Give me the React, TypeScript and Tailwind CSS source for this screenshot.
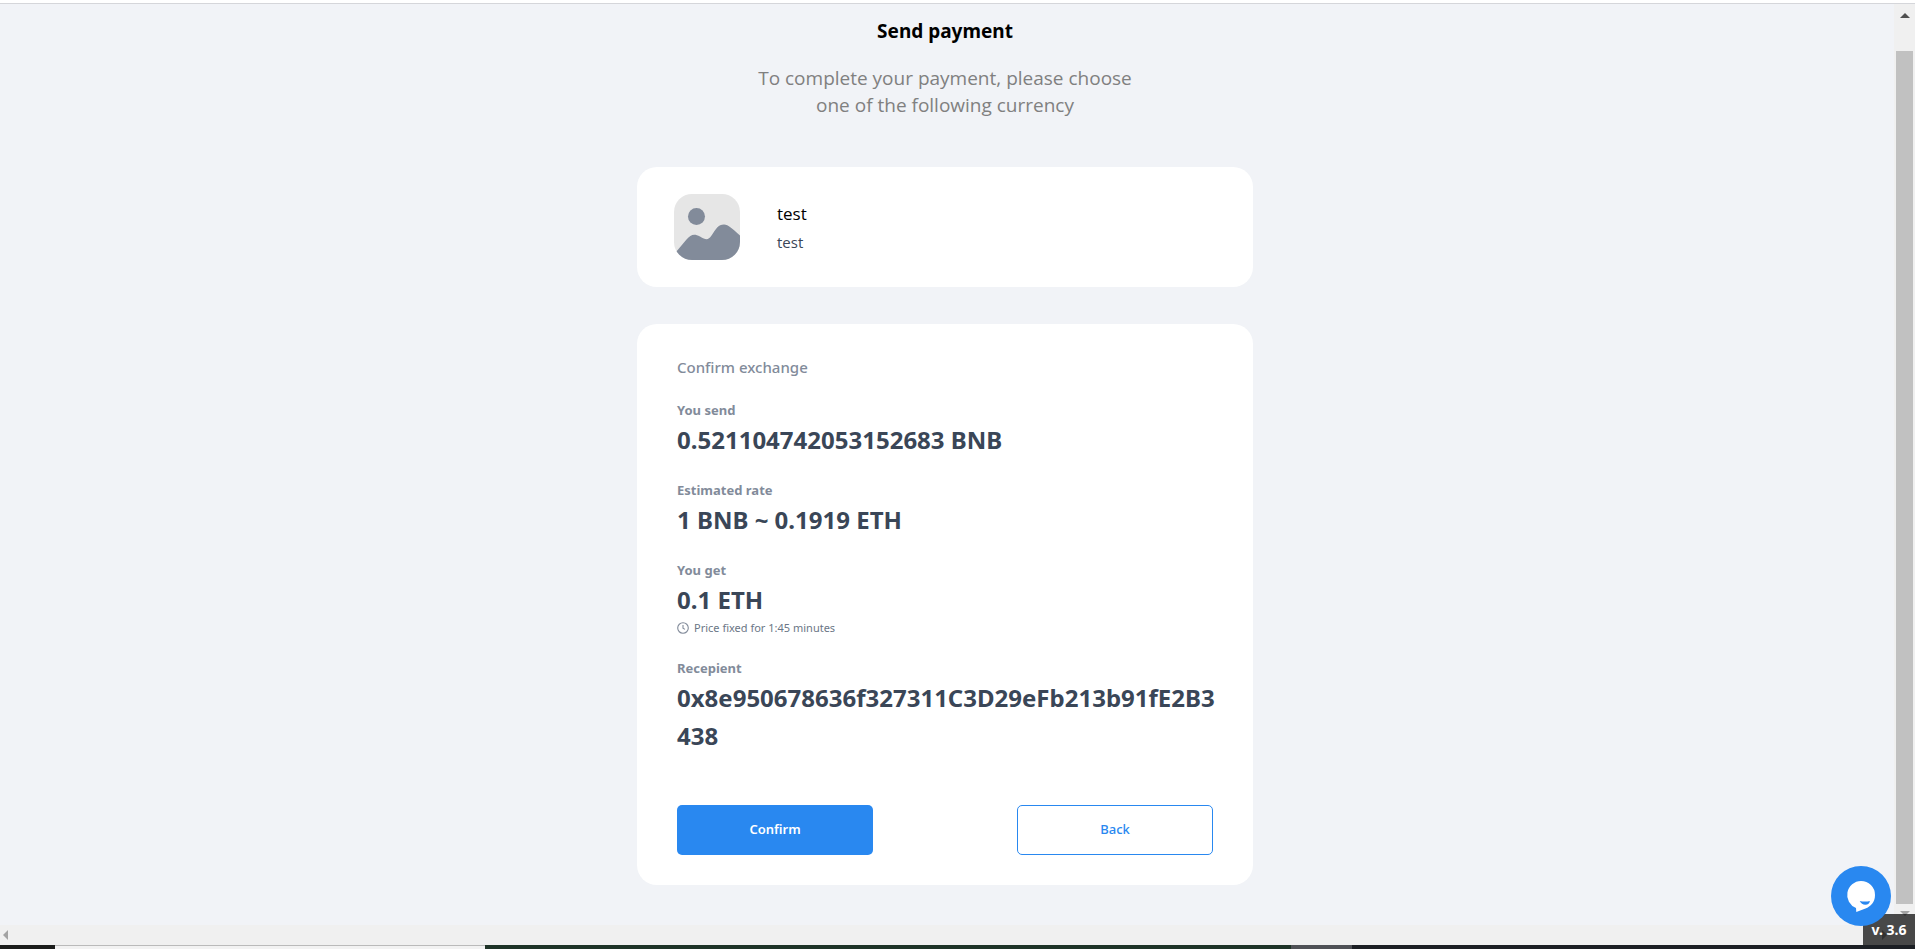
import type { ReactNode } from "react";

function Arrow({ points, className }: { points: string; className: string }) {
  return (
    <svg viewBox="0 0 10 10" className={`size-2.5 shrink-0 ${className}`} aria-hidden="true">
      <polygon points={points} fill="currentColor" />
    </svg>
  );
}

function PlaceholderImage() {
  return (
    <svg viewBox="0 0 66 66" className="size-[66px] shrink-0" role="img" aria-label="Product">
      <defs>
        <clipPath id="tile">
          <rect width="66" height="66" rx="18" />
        </clipPath>
      </defs>
      <g clipPath="url(#tile)">
        <rect width="66" height="66" fill="#e6e6e6" />
        <circle cx="22.5" cy="22.5" r="8.5" fill="#828b9a" />
        <path
          d="M2 58 L12.5 45.5 C17 40 20.5 39.5 26 42.5 C32 46 34 46.5 37.5 41.5 C42 35 44 30.5 50 30.5 C54.5 30.5 58 34.5 66 41.5 V66 H2 Z"
          fill="#828b9a"
        />
      </g>
    </svg>
  );
}

function ClockIcon() {
  return (
    <svg viewBox="0 0 12 12" className="size-3 shrink-0" fill="none" stroke="#828b9a" aria-hidden="true">
      <circle cx="6" cy="6" r="5.3" strokeWidth="1.1" />
      <path d="M6 3 V6.2 L8 7.4" strokeWidth="1.1" />
    </svg>
  );
}

function Field({ label, value, children }: { label: string; value: string; children?: ReactNode }) {
  return (
    <div>
      <dt className="text-[13px] leading-[21px] font-bold text-[#828b9a]">{label}</dt>
      <dd className="-mr-1 text-2xl leading-[38px] font-bold break-all text-[#3a4657]">{value}</dd>
      {children}
    </div>
  );
}

export default function App() {
  return (
    <div className="relative flex h-screen flex-col overflow-hidden bg-[#f0f0f0] font-['Noto_Sans',sans-serif]">
      <div className="h-1 shrink-0 border-b border-[#d5d6da] bg-white" />

      <div className="flex min-h-0 flex-1">
        <div className="flex min-w-0 flex-1 flex-col">
          <main className="flex min-h-0 flex-1 flex-col items-center overflow-hidden bg-[#f1f3f7] pt-3.5 pr-1">
            <h1 className="text-[19px] leading-[27px] font-bold text-black">Send payment</h1>
            <p className="mt-5 max-w-[400px] text-center font-['Open_Sans',sans-serif] text-[19px] leading-[27px] text-[#808080]">
              To complete your payment, please choose one of the following currency
            </p>

            <section className="mt-12 flex w-full max-w-[616px] items-center gap-[37px] rounded-[20px] bg-white px-[37px] py-[27px]">
              <PlaceholderImage />
              <div className="pt-0.5 font-['Open_Sans',sans-serif]">
                <h2 className="text-[17px] leading-7 text-black">test</h2>
                <p className="text-[15px] leading-7 text-[#3a4657]">test</p>
              </div>
            </section>

            <section className="mt-[37px] w-full max-w-[616px] rounded-[20px] bg-white px-10 pt-[31px] pb-[30px]">
              <h2 className="text-[15px] leading-6 font-medium text-[#828b9a]">Confirm exchange</h2>
              <dl className="mt-[21px] flex flex-col gap-[21px]">
                <Field label="You send" value="0.521104742053152683 BNB" />
                <Field label="Estimated rate" value="1 BNB ~ 0.1919 ETH" />
                <Field label="You get" value="0.1 ETH">
                  <dd className="flex items-center gap-[5px] text-[11px] leading-[18px] text-[#6b7686]">
                    <ClockIcon />
                    Price fixed for 1:45 minutes
                  </dd>
                </Field>
                <Field label="Recepient" value="0x8e950678636f327311C3D29eFb213b91fE2B3438" />
              </dl>
              <div className="mt-[50px] flex justify-between">
                <button type="button" className="h-[50px] w-[196px] rounded-[5px] bg-[#2988f0] text-[13px] font-semibold text-white">
                  Confirm
                </button>
                <button type="button" className="h-[50px] w-[196px] rounded-[5px] border border-[#2988f0] bg-white text-[13px] font-medium text-[#2988f0]">
                  Back
                </button>
              </div>
            </section>
          </main>
          <div className="flex h-5 shrink-0 items-center justify-between px-[3px]">
            <Arrow points="0,5 5,0 5,10" className="text-[#a3a3a3]" />
            <Arrow points="10,5 5,0 5,10" className="mr-1 text-[#a3a3a3]" />
          </div>
        </div>

        <div className="flex w-[21px] shrink-0 flex-col items-center pt-1 pb-6">
          <Arrow points="0,10 5,5 10,10" className="text-[#505050]" />
          <div className="mt-[33px] mb-[7px] w-[17px] flex-1 bg-[#c1c1c1]" />
          <Arrow points="0,0 10,0 5,5" className="text-[#a3a3a3]" />
        </div>
      </div>

      <div className="flex h-1 shrink-0 bg-[#1c1f24]">
        <div className="w-[55px] bg-[#1b1d1b]" />
        <div className="w-[430px] border-t border-[#bababa] bg-[#f2f2f2]" />
        <div className="w-[806px] bg-[#1e3327]" />
        <div className="w-[61px] bg-[#4f5156]" />
      </div>

      <div className="absolute right-0 bottom-1 flex h-[31px] w-[52px] items-center justify-center bg-black/70 text-sm font-bold text-white">
        v. 3.6
      </div>
      <button type="button" aria-label="Open chat" className="absolute right-6 bottom-[23px] size-[60px] rounded-full bg-[#2988f0]">
        <svg viewBox="0 0 60 60" className="size-full" aria-hidden="true">
          <path d="M30 15 A14 14 0 0 1 44 29 C44 36.5 39.5 40.5 34.5 42.5 L25.3 46 L25 42 A14 14 0 0 1 30 15 Z" fill="#fff" />
          <path d="M28.7 35 Q34 36 38.9 35 Q38.5 38.7 34.3 38.7 Q30.5 38.7 28.7 35 Z" fill="#2988f0" />
        </svg>
      </button>
    </div>
  );
}
